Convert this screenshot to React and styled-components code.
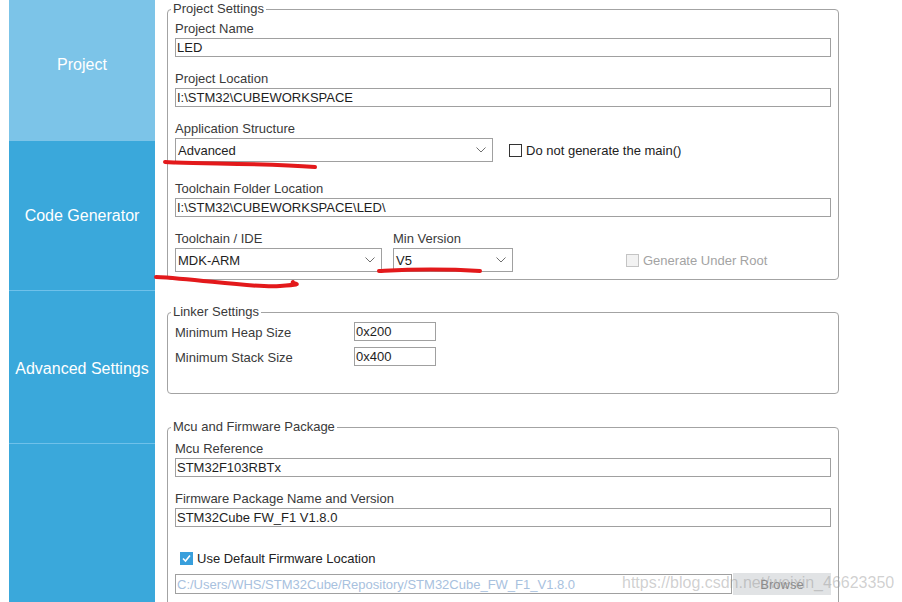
import React from "react";
import styled, { createGlobalStyle } from "styled-components";

const GlobalStyle = createGlobalStyle`
  html, body {
    margin: 0;
    padding: 0;
    background: #fff;
    overflow: hidden;
  }
  body {
    font-family: "Liberation Sans", Arial, sans-serif;
  }
  * {
    box-sizing: border-box;
  }
`;

function Chevron() {
  return (
    <svg width="10" height="6" viewBox="0 0 10 6">
      <polyline points="0.5,0.5 5,5 9.5,0.5" fill="none" stroke="#6f6f6f" strokeWidth="1" />
    </svg>
  );
}

function Check({ checked, disabled, children, ml }) {
  return (
    <CheckRow $ml={ml} $disabled={disabled}>
      <CheckBox $checked={checked} $disabled={disabled}>
        {checked && (
          <svg width="11" height="11" viewBox="0 0 11 11">
            <polyline points="2,5.5 4.5,8 9,2.5" fill="none" stroke="#fff" strokeWidth="1.6" />
          </svg>
        )}
      </CheckBox>
      {children}
    </CheckRow>
  );
}

const navItems = [
  { label: "Project", h: 141, active: true, pb: 12 },
  { label: "Code Generator", h: 150, line: true },
  { label: "Advanced Settings", h: 153, line: true, pt: 4 },
  { label: "", h: 158 },
];

export default function App() {
  return (
    <Page>
      <GlobalStyle />
      <Sidebar>
        {navItems.map((item, i) => (
          <NavItem key={i} $h={item.h} $active={item.active} $line={item.line} $pb={item.pb} $pt={item.pt}>
            {item.label}
          </NavItem>
        ))}
      </Sidebar>

      <Main>
        <Group $pt={3} $pb={7}>
          <Legend>Project Settings</Legend>
          <Field>
            <Label>Project Name</Label>
            <TextBox readOnly value="LED" />
          </Field>
          <Field $mt={13}>
            <Label>Project Location</Label>
            <TextBox readOnly value="I:\STM32\CUBEWORKSPACE" />
          </Field>
          <Field $mt={13}>
            <Label>Application Structure</Label>
            <Row>
              <Select $w={318}>
                Advanced
                <Chevron />
              </Select>
              <Check ml={16}>Do not generate the main()</Check>
            </Row>
          </Field>
          <Field $mt={18}>
            <Label>Toolchain Folder Location</Label>
            <TextBox readOnly value="I:\STM32\CUBEWORKSPACE\LED\" />
          </Field>
          <Row $mt={13}>
            <Column>
              <Label>Toolchain / IDE</Label>
              <Select $w={207}>
                MDK-ARM
                <Chevron />
              </Select>
            </Column>
            <Column $ml={11}>
              <Label>Min Version</Label>
              <Select $w={120}>
                V5
                <Chevron />
              </Select>
            </Column>
            <Check ml={113} disabled>
              Generate Under Root
            </Check>
          </Row>
        </Group>

        <Group $pt={2} $pb={27}>
          <Legend>Linker Settings</Legend>
          <LinkerRow>
            <Label $inline>Minimum Heap Size</Label>
            <TextBox readOnly value="0x200" />
          </LinkerRow>
          <LinkerRow $mt={6}>
            <Label $inline>Minimum Stack Size</Label>
            <TextBox readOnly value="0x400" />
          </LinkerRow>
        </Group>

        <Group $pt={5} $pb={20} $mt={1}>
          <Legend>Mcu and Firmware Package</Legend>
          <Field>
            <Label>Mcu Reference</Label>
            <TextBox readOnly value="STM32F103RBTx" />
          </Field>
          <Field $mt={13}>
            <Label>Firmware Package Name and Version</Label>
            <TextBox readOnly value="STM32Cube FW_F1 V1.8.0" />
          </Field>
          <CheckLine>
            <Check checked>Use Default Firmware Location</Check>
          </CheckLine>
          <PathRow>
            <TextBox readOnly disabled $dim value="C:/Users/WHS/STM32Cube/Repository/STM32Cube_FW_F1_V1.8.0" $h={20} />
            <BrowseButton type="button" disabled>
              Browse
            </BrowseButton>
          </PathRow>
        </Group>
      </Main>

      <Marks width="902" height="602" viewBox="0 0 902 602">
        <path d="M165 162 C 200 164, 260 163, 315 167" />
        <path d="M156 277 C 200 279, 250 288, 280 286 S 290 284, 293 282" />
        <path d="M379 271 C 400 270, 430 268, 480 271" />
      </Marks>
      <Watermark>https://blog.csdn.net/weixin_46623350</Watermark>
    </Page>
  );
}

const Page = styled.div`
  position: relative;
  display: flex;
  height: 602px;
  width: 902px;
  padding-left: 9px;
  overflow: hidden;
`;

const Sidebar = styled.nav`
  flex: none;
  width: 146px;
  display: flex;
  flex-direction: column;
  background: #3aa8db;
`;

const NavItem = styled.div`
  flex: none;
  height: ${(p) => p.$h}px;
  display: flex;
  align-items: center;
  justify-content: center;
  padding-bottom: ${(p) => p.$pb || 0}px;
  padding-top: ${(p) => p.$pt || 0}px;
  color: #fff;
  font-size: 16px;
  white-space: nowrap;
  background: ${(p) => (p.$active ? "#7cc4e8" : "transparent")};
  border-bottom: ${(p) => (p.$line ? "1px solid #6fc1ea" : "none")};
`;

const Main = styled.main`
  flex: none;
  width: 684px;
  padding: 1px 0 0 12px;
  display: flex;
  flex-direction: column;
  gap: 24px;
`;

const Group = styled.fieldset`
  margin: ${(p) => p.$mt || 0}px 0 0;
  min-width: 0;
  padding: ${(p) => p.$pt ?? 4}px 7px ${(p) => p.$pb}px;
  border: 1px solid #a3a3a3;
  border-radius: 4px;
`;

const Legend = styled.legend`
  padding: 0 2px;
  margin-left: -4px;
  font-size: 13px;
  line-height: 16px;
  color: #3a3a3a;
`;

const Field = styled.div`
  margin-top: ${(p) => p.$mt || 0}px;
`;

const Label = styled.label`
  display: block;
  font-size: 13px;
  line-height: 16px;
  color: #3a3a3a;
  padding-top: ${(p) => (p.$inline ? 2 : 1)}px;
  margin-bottom: ${(p) => (p.$inline ? 0 : 1)}px;
  white-space: nowrap;
`;

const TextBox = styled.input`
  display: block;
  width: 100%;
  height: ${(p) => p.$h || 19}px;
  margin: 0;
  padding: 0 1px;
  border: 1px solid #a0a0a0;
  border-radius: 0;
  background: #fff;
  font-family: "Liberation Sans", Arial, sans-serif;
  font-size: 13px;
  color: ${(p) => (p.$dim ? "#a8c1de" : "#1e1e1e")};
  outline: none;
`;

const Row = styled.div`
  display: flex;
  align-items: flex-end;
  margin-top: ${(p) => p.$mt || 0}px;
`;

const Column = styled.div`
  margin-left: ${(p) => p.$ml || 0}px;
`;

const Select = styled.div`
  flex: none;
  width: ${(p) => p.$w}px;
  height: 24px;
  display: flex;
  align-items: center;
  justify-content: space-between;
  padding: 0 6px 0 2px;
  border: 1px solid #a0a0a0;
  background: #fff;
  font-size: 13px;
  color: #1e1e1e;
`;

const CheckRow = styled.div`
  display: flex;
  align-items: center;
  gap: 4px;
  height: 24px;
  margin-left: ${(p) => p.$ml || 0}px;
  font-size: 13px;
  color: ${(p) => (p.$disabled ? "#a3a3a3" : "#222")};
  white-space: nowrap;
`;

const CheckBox = styled.span`
  flex: none;
  width: 13px;
  height: 13px;
  display: inline-flex;
  align-items: center;
  justify-content: center;
  border: 1px solid
    ${(p) => (p.$checked ? "#389fdc" : p.$disabled ? "#c4c4c4" : "#333")};
  background: ${(p) => (p.$checked ? "#389fdc" : p.$disabled ? "#f2f2f2" : "#fff")};
`;

const LinkerRow = styled.div`
  display: grid;
  grid-template-columns: 179px 82px;
  align-items: center;
  margin-top: ${(p) => p.$mt || 0}px;
`;

const CheckLine = styled.div`
  margin-top: 19px;
  padding-left: 5px;
`;

const PathRow = styled.div`
  display: flex;
  align-items: center;
  gap: 1px;
  margin-top: 3px;
`;

const BrowseButton = styled.button`
  flex: none;
  width: 98px;
  height: 22px;
  margin: 0;
  border: none;
  background: #e1e3e5;
  color: #8a8a8a;
  font-family: "Liberation Sans", Arial, sans-serif;
  font-size: 13px;
`;

const Marks = styled.svg`
  position: absolute;
  left: 0;
  top: 0;
  pointer-events: none;

  path {
    fill: none;
    stroke: #e3191b;
    stroke-width: 4;
    stroke-linecap: round;
  }
`;

const Watermark = styled.div`
  position: absolute;
  left: 622px;
  top: 574px;
  font-size: 16px;
  line-height: 18px;
  color: rgba(150, 150, 150, 0.45);
  white-space: nowrap;
  pointer-events: none;
`;
